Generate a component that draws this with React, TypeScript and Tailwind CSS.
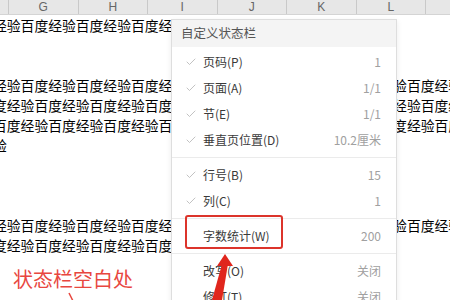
import { Check } from 'lucide-react'

type MenuItem = {
  label: string
  value: string
  checked: boolean
}

const groups: MenuItem[][] = [
  [
    { label: '页码(P)', value: '1', checked: true },
    { label: '页面(A)', value: '1/1', checked: true },
    { label: '节(E)', value: '1/1', checked: true },
    { label: '垂直页位置(D)', value: '10.2厘米', checked: true },
  ],
  [
    { label: '行号(B)', value: '15', checked: true },
    { label: '列(C)', value: '1', checked: true },
  ],
  [{ label: '字数统计(W)', value: '200', checked: false }],
  [
    { label: '改写(O)', value: '关闭', checked: false },
    { label: '修订(T)', value: '关闭', checked: false },
  ],
]

const A = '经验百度'
const rows: string[] = [
  A.repeat(4) + '经',
  '',
  '',
  A.repeat(9),
  '度' + A.repeat(9),
  '百度经验'.repeat(9),
  '验',
  '',
  '',
  '',
  A.repeat(9),
  '度' + A.repeat(5),
  '',
  '',
]

const columns = ['G', 'H', 'I', 'J', 'K', 'L', 'M']

export default function App() {
  return (
    <div className="relative w-[450px] h-[300px] overflow-hidden bg-white font-['Noto_Sans_CJK_SC',sans-serif]">
      {/* Column header */}
      <div className="flex h-[15px] bg-[#e7e7e7] border-b border-[#d4d4d4]">
        <div className="w-[8px] shrink-0"></div>
        {columns.map((c) => (
          <div
            key={c}
            className="w-[69.5px] shrink-0 border-l border-[#c9c9c9] flex items-center justify-center text-[12px] leading-none text-[#666] font-['Liberation_Sans',sans-serif]"
          >
            {c}
          </div>
        ))}
      </div>

      {/* Sheet rows */}
      <div className="flex flex-col">
        {rows.map((text, i) => (
          <div key={i} className="h-[20px] overflow-hidden whitespace-nowrap text-[13.8px] leading-[20px] text-black">
            <span className="-ml-[7px] inline-block">{text}</span>
          </div>
        ))}
      </div>

      {/* Status bar context menu */}
      <div className="absolute left-[171px] top-[19px] w-[226px] bg-white border border-[#dedede] shadow-[0_2px_6px_rgba(0,0,0,0.08)]">
        <div className="h-[27px] bg-[#f4f4f4] pl-[9px] flex items-center text-[12.5px] text-[#555]">
          自定义状态栏
        </div>
        <div className="pt-[2px]">
          {groups.map((group, gi) => (
            <div key={gi}>
              {gi > 0 && (
                <div className="py-[4px]">
                  <div className="h-px bg-[#ebebeb]"></div>
                </div>
              )}
              {group.map((item) => (
                <div key={item.label} className="h-[26px] flex items-center pl-[13px] pr-[15px] text-[12px]">
                  <div className="w-[18px] shrink-0 flex items-center">
                    {item.checked && <Check className="w-[12px] h-[12px] text-[#b3b3b3]" strokeWidth={1.6} />}
                  </div>
                  <span className="text-[#3a3a3a]">{item.label}</span>
                  <span className="ml-auto text-[#a0a0a0]">{item.value}</span>
                </div>
              ))}
            </div>
          ))}
        </div>
      </div>

      {/* Annotation: highlight box */}
      <div className="absolute left-[185px] top-[215px] w-[98px] h-[34px] border-2 border-[#dc342b] rounded-[3px]"></div>

      {/* Annotation: label */}
      <div className="absolute left-[13px] top-[269px] text-[20px] leading-none text-[#e8473f]">状态栏空白处</div>

      {/* Annotation: arrows */}
      <svg className="absolute left-0 top-0" width="450" height="300" viewBox="0 0 450 300">
        <line x1="69" y1="293" x2="73" y2="301" stroke="#e8473f" strokeWidth="1.5" />
        <polygon points="222,264 228,264 222,300 212,300" fill="#e0261d" />
        <polygon points="225,254 233,266 217,266" fill="#e0261d" />
      </svg>
    </div>
  )
}
